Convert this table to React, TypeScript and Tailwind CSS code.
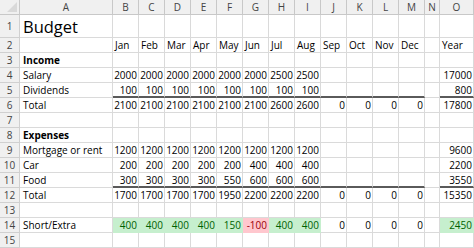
type Row = {
  n: number
  label?: string
  bold?: boolean
  title?: boolean
  months?: boolean
  vals?: (number | null)[]
  year?: number
  line?: boolean
  fill?: boolean
}

const letters = ['A', 'B', 'C', 'D', 'E', 'F', 'G', 'H', 'I', 'J', 'K', 'L', 'M', 'N', 'O']
const monthNames = ['Jan', 'Feb', 'Mar', 'Apr', 'May', 'Jun', 'Jul', 'Aug', 'Sep', 'Oct', 'Nov', 'Dec']

const rep = (v: number, n: number) => Array(n).fill(v) as number[]
const none = [null, null, null, null]

const rows: Row[] = [
  { n: 1, label: 'Budget', title: true },
  { n: 2, months: true },
  { n: 3, label: 'Income', bold: true },
  { n: 4, label: 'Salary', vals: [...rep(2000, 6), 2500, 2500, ...none], year: 17000 },
  { n: 5, label: 'Dividends', vals: [...rep(100, 8), ...none], year: 800, line: true },
  { n: 6, label: 'Total', vals: [...rep(2100, 6), 2600, 2600, 0, 0, 0, 0], year: 17800 },
  { n: 7 },
  { n: 8, label: 'Expenses', bold: true },
  { n: 9, label: 'Mortgage or rent', vals: [...rep(1200, 8), ...none], year: 9600 },
  { n: 10, label: 'Car', vals: [...rep(200, 5), 400, 400, 400, ...none], year: 2200 },
  { n: 11, label: 'Food', vals: [300, 300, 300, 300, 550, 600, 600, 600, ...none], year: 3550, line: true },
  { n: 12, label: 'Total', vals: [1700, 1700, 1700, 1700, 1950, 2200, 2200, 2200, 0, 0, 0, 0], year: 15350 },
  { n: 13 },
  { n: 14, label: 'Short/Extra', vals: [400, 400, 400, 400, 150, -100, 400, 400, 0, 0, 0, 0], year: 2450, fill: true },
  { n: 15 },
]

const grid = 'border-r border-b border-[#dadada]'

function NumCell({ v, line, fill }: { v: number | null | undefined; line?: boolean; fill?: 'green' | 'red' | null }) {
  let cls = grid
  if (fill === 'green') cls = 'border-r border-b border-[#c6efce] bg-[#c6efce] text-[#006100]'
  if (fill === 'red') cls = 'border-r border-b border-[#ffc7ce] bg-[#ffc7ce] text-[#9c0006]'
  return (
    <div className={`flex items-center justify-end pr-[1px] ${cls} ${line ? 'border-b-2 border-b-[#5a5a5a]' : ''}`}>
      {v ?? ''}
    </div>
  )
}

function SheetRow({ row }: { row: Row }) {
  return (
    <>
      <div className="flex items-center justify-center border-r border-b border-[#d0d0d0] bg-[#f0f0f0] text-[10px] text-[#444]">
        {row.n}
      </div>
      {row.title ? (
        <div className={`${grid} flex items-end pb-[2px] pl-[3px] text-[16.5px] leading-none`}>{row.label}</div>
      ) : (
        <div className={`${grid} flex items-center pl-[3px] ${row.bold ? 'font-bold' : ''}`}>{row.label ?? ''}</div>
      )}
      {row.months
        ? monthNames.map((m) => (
            <div key={m} className={`${grid} flex items-center pl-[2px]`}>
              {m}
            </div>
          ))
        : Array.from({ length: 12 }, (_, i) => {
            const v = row.vals?.[i]
            let fill: 'green' | 'red' | null = null
            if (row.fill && i < 8) fill = (v ?? 0) < 0 ? 'red' : 'green'
            return <NumCell key={i} v={v} line={row.line} fill={fill} />
          })}
      <div className={grid} />
      {row.months ? (
        <div className={`${grid} flex items-center pl-[2px]`}>Year</div>
      ) : (
        <NumCell v={row.year} line={row.line} fill={row.fill ? 'green' : null} />
      )}
    </>
  )
}

export default function App() {
  return (
    <div className="h-[248px] w-[474px] overflow-hidden bg-white font-['Open_Sans',Arial,sans-serif] text-[10px] leading-none text-black">
      <div className="grid grid-cols-[20px_93px_repeat(12,26px)_15px_34px] grid-rows-[15px_23px_repeat(14,15px)]">
        {/* header row */}
        <div className="relative border-r border-b border-[#c8c8c8] bg-[#f0f0f0]">
          <svg className="absolute right-[2px] bottom-[2px]" width="10" height="10" viewBox="0 0 10 10">
            <path d="M10 0 L10 10 L0 10 Z" fill="#d9d9d9" />
          </svg>
        </div>
        {letters.map((l) => (
          <div
            key={l}
            className="flex items-center justify-center border-r border-b border-[#c8c8c8] bg-[#f0f0f0] text-[10px] text-[#444]"
          >
            {l}
          </div>
        ))}
        {rows.map((r) => (
          <SheetRow key={r.n} row={r} />
        ))}
      </div>
    </div>
  )
}
